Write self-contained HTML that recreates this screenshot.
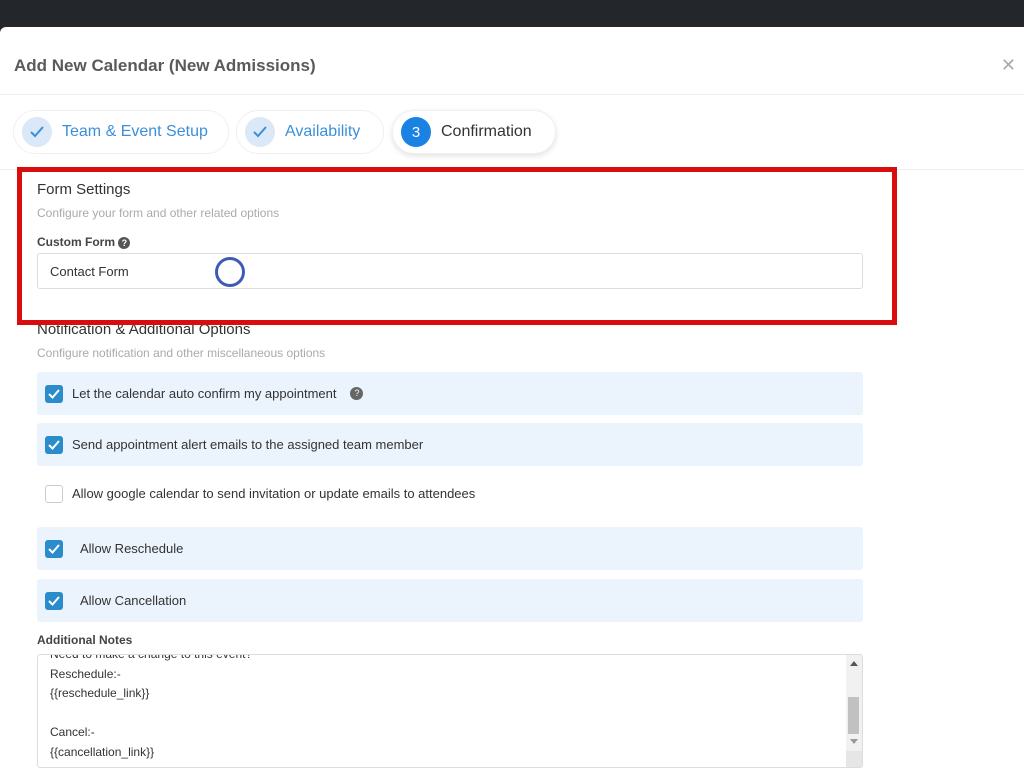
<!DOCTYPE html>
<html><head><style>
*{box-sizing:border-box;margin:0;padding:0}
html,body{width:1024px;height:768px;overflow:hidden}
body{background:#23262b;font-family:"Liberation Sans",sans-serif;position:relative}
.modal{position:absolute;left:0;top:27px;width:1024px;height:741px;background:#fff;border-radius:6px 0 0 0;overflow:hidden}
.abs{position:absolute}
.t{color:#5a5a5a;font-size:17px;font-weight:600;left:14px;top:29px}
.pill{position:absolute;top:83px;height:44px;border-radius:22px;border:1px solid #eef0f3;background:#fff;display:flex;align-items:center;padding-left:8px;font-size:16px}
.circ{width:30px;height:30px;border-radius:50%;background:#dbe8f7;display:flex;align-items:center;justify-content:center;margin-right:10px}
.row{position:absolute;left:37px;width:826px;height:43px;background:#ebf3fc;border-radius:3px;font-size:13px;color:#333;display:flex;align-items:center}
.cb{width:18px;height:18px;border-radius:3px;background:#2a8ccb;margin-left:8px;margin-right:9px;display:flex;align-items:center;justify-content:center}
.cb.off{background:#fff;border:1px solid #ccc}
</style></head><body>
<div class="modal">
<div class="abs t">Add New Calendar (New Admissions)</div>
<div class="abs" style="right:8px;top:28px;color:#aaa;font-size:18px">✕</div>
<div class="abs" style="left:0;top:67px;width:1024px;height:1px;background:#eee"></div>
<div class="pill" style="left:13px;width:216px;color:#3b8fd9"><div class="circ"><svg width="16" height="14"><path d="M2 7l4 4 8-9" stroke="#3b8fd9" stroke-width="2" fill="none"/></svg></div>Team &amp; Event Setup</div>
<div class="pill" style="left:236px;width:148px;color:#3b8fd9"><div class="circ"><svg width="16" height="14"><path d="M2 7l4 4 8-9" stroke="#3b8fd9" stroke-width="2" fill="none"/></svg></div>Availability</div>
<div class="pill" style="left:392px;width:164px;color:#333;box-shadow:0 2px 6px rgba(0,0,0,.12)"><div class="circ" style="background:#1a82e2;color:#fff;font-size:15px;margin-right:10px">3</div>Confirmation</div>
<div class="abs" style="left:0;top:142px;width:1024px;height:1px;background:#eee"></div>
<div class="abs" style="left:37px;top:154px;font-size:15px;color:#333">Form Settings</div>
<div class="abs" style="left:37px;top:179px;font-size:12px;color:#aaa">Configure your form and other related options</div>
<div class="abs" style="left:37px;top:208px;font-size:12px;color:#444;font-weight:bold">Custom Form <span style="display:inline-block;width:12px;height:12px;border-radius:50%;background:#555;color:#fff;font-size:9px;text-align:center;line-height:12px">?</span></div>
<div class="abs" style="left:37px;top:226px;width:826px;height:36px;border:1px solid #ddd;border-radius:3px;font-size:13px;color:#333;padding:10px 12px">Contact Form</div>
<div class="abs" style="left:215px;top:230px;width:30px;height:30px;border:3px solid #3f5bb5;border-radius:50%"></div>
<div class="abs" style="left:37px;top:294px;font-size:15px;color:#333">Notification &amp; Additional Options</div>
<div class="abs" style="left:37px;top:319px;font-size:12px;color:#aaa">Configure notification and other miscellaneous options</div>
<div class="abs" style="left:17px;top:140px;width:880px;height:158px;border:5px solid #d90d0d"></div>
<div class="row" style="top:345px"><div class="cb"><svg width="12" height="10"><path d="M1 5l3.5 3.5L11 1" stroke="#fff" stroke-width="2" fill="none"/></svg></div>Let the calendar auto confirm my appointment <span style="display:inline-block;margin-left:14px;width:13px;height:13px;border-radius:50%;background:#666;color:#fff;font-size:9px;text-align:center;line-height:13px">?</span></div>
<div class="row" style="top:396px"><div class="cb"><svg width="12" height="10"><path d="M1 5l3.5 3.5L11 1" stroke="#fff" stroke-width="2" fill="none"/></svg></div>Send appointment alert emails to the assigned team member</div>
<div class="row" style="top:445px;background:#fff"><div class="cb off"></div>Allow google calendar to send invitation or update emails to attendees</div>
<div class="row" style="top:500px"><div class="cb" style="margin-right:17px"><svg width="12" height="10"><path d="M1 5l3.5 3.5L11 1" stroke="#fff" stroke-width="2" fill="none"/></svg></div>Allow Reschedule</div>
<div class="row" style="top:552px"><div class="cb" style="margin-right:17px"><svg width="12" height="10"><path d="M1 5l3.5 3.5L11 1" stroke="#fff" stroke-width="2" fill="none"/></svg></div>Allow Cancellation</div>
<div class="abs" style="left:37px;top:606px;font-size:12px;color:#444;font-weight:bold">Additional Notes</div>
<div class="abs" style="left:37px;top:627px;width:826px;height:114px;border:1px solid #ddd;border-radius:3px;font-size:12px;color:#333;line-height:19.5px;padding:4px 12px;overflow:hidden">
<div style="margin-top:-14px">Need to make a change to this event?</div>Reschedule:-<br>{{reschedule_link}}<br><br>Cancel:-<br>{{cancellation_link}}
<div class="abs" style="right:0;top:0;width:16px;height:114px;background:#f1f1f1">
<div class="abs" style="left:4px;top:6px;width:0;height:0;border-left:4px solid transparent;border-right:4px solid transparent;border-bottom:5px solid #555"></div>
<div class="abs" style="left:2px;top:42px;width:11px;height:37px;background:#c1c1c1"></div>
<div class="abs" style="left:4px;top:84px;width:0;height:0;border-left:4px solid transparent;border-right:4px solid transparent;border-top:5px solid #999"></div>
<div class="abs" style="left:0;top:96px;width:16px;height:18px;background:#e6e6e6"></div>
</div>
</div>
</div>
</body></html>
